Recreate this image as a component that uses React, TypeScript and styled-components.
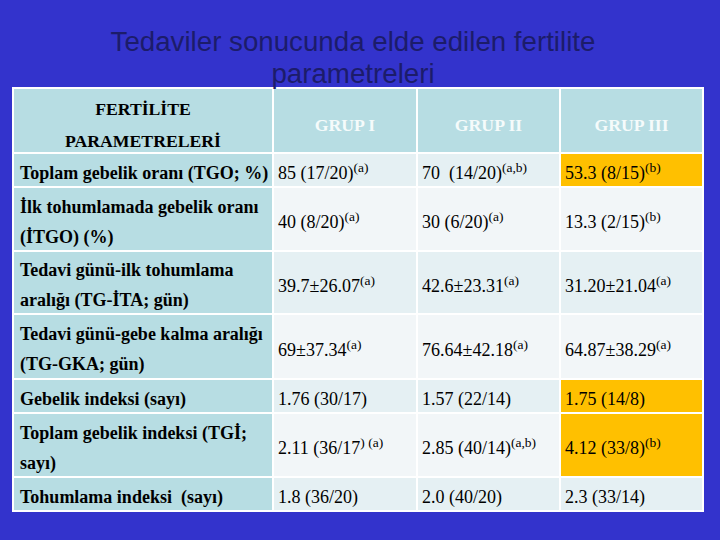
import React from "react";
import styled, { createGlobalStyle } from "styled-components";

const GlobalStyle = createGlobalStyle`
  html, body { margin: 0; padding: 0; background: #3333cc; }
  * { box-sizing: border-box; }
`;

const Page = styled.div`
  width: 720px;
  height: 540px;
  background: #3333cc;
  display: flex;
  flex-direction: column;
  padding: 26px 0 0 12px;
  overflow: hidden;
`;

const Title = styled.h1`
  position: relative;
  z-index: 1;
  margin: 0;
  padding-right: 26px;
  font-family: "Liberation Sans", Arial, sans-serif;
  font-weight: normal;
  font-size: 27.7px;
  line-height: 32px;
  color: #1c1c6a;
  text-align: center;
  height: 61px;
`;

const Table = styled.div`
  width: 692px;
  display: grid;
  grid-template-columns: 258px 142px 141px 141px;
  grid-template-rows: 63px 32px 62px 61px 63px 32px 62px 32px;
  gap: 2px;
  padding: 2px;
  background: #ffffff;
  font-family: "Liberation Serif", "Times New Roman", serif;
  font-size: 18px;
  color: #000;
`;

const HeadCell = styled.div<{ $light?: boolean }>`
  background: #b7dde3;
  display: flex;
  flex-direction: column;
  align-items: center;
  justify-content: center;
  padding-top: 8px;
  font-weight: bold;
  font-size: 17.7px;
  line-height: 32px;
  color: ${(p) => (p.$light ? "#f5fbfb" : "#000")};
  white-space: nowrap;
`;

const LabelCell = styled.div`
  background: #b7dde3;
  display: flex;
  flex-direction: column;
  justify-content: center;
  padding: 5px 0 0 6px;
  font-weight: bold;
  line-height: 30px;
  white-space: pre;
`;

const ValueCell = styled.div<{ $alt: boolean; $hl?: boolean }>`
  background: ${(p) => (p.$hl ? "#ffc000" : p.$alt ? "#f2f6f8" : "#e5f0f3")};
  display: flex;
  align-items: center;
  padding: 6px 0 0 4px;
  line-height: 22px;
  white-space: pre;
`;

const Sup = styled.span`
  font-size: 13.5px;
  vertical-align: 7px;
  line-height: 0;
`;

type Cell = { text: string; sup?: string; hl?: boolean };
type Row = { label: string[]; cells: Cell[] };

const rows: Row[] = [
  {
    label: ["Toplam gebelik oranı (TGO; %)"],
    cells: [
      { text: "85 (17/20)", sup: "(a)" },
      { text: "70  (14/20)", sup: "(a,b)" },
      { text: "53.3 (8/15)", sup: "(b)", hl: true },
    ],
  },
  {
    label: ["İlk tohumlamada gebelik oranı", "(İTGO) (%)"],
    cells: [
      { text: "40 (8/20)", sup: "(a)" },
      { text: "30 (6/20)", sup: "(a)" },
      { text: "13.3 (2/15)", sup: "(b)" },
    ],
  },
  {
    label: ["Tedavi günü-ilk tohumlama", "aralığı (TG-İTA; gün)"],
    cells: [
      { text: "39.7±26.07", sup: "(a)" },
      { text: "42.6±23.31", sup: "(a)" },
      { text: "31.20±21.04", sup: "(a)" },
    ],
  },
  {
    label: ["Tedavi günü-gebe kalma aralığı", "(TG-GKA; gün)"],
    cells: [
      { text: "69±37.34", sup: "(a)" },
      { text: "76.64±42.18", sup: "(a)" },
      { text: "64.87±38.29", sup: "(a)" },
    ],
  },
  {
    label: ["Gebelik indeksi (sayı)"],
    cells: [
      { text: "1.76 (30/17)" },
      { text: "1.57 (22/14)" },
      { text: "1.75 (14/8)", hl: true },
    ],
  },
  {
    label: ["Toplam gebelik indeksi (TGİ;", "sayı)"],
    cells: [
      { text: "2.11 (36/17", sup: ") (a)" },
      { text: "2.85 (40/14)", sup: "(a,b)" },
      { text: "4.12 (33/8)", sup: "(b)", hl: true },
    ],
  },
  {
    label: ["Tohumlama indeksi  (sayı)"],
    cells: [
      { text: "1.8 (36/20)" },
      { text: "2.0 (40/20)" },
      { text: "2.3 (33/14)" },
    ],
  },
];

export default function App() {
  return (
    <>
      <GlobalStyle />
      <Page>
        <Title>
          Tedaviler sonucunda elde edilen fertilite
          <br />
          parametreleri
        </Title>
        <Table>
          <HeadCell>
            <span>FERTİLİTE</span>
            <span>PARAMETRELERİ</span>
          </HeadCell>
          <HeadCell $light>GRUP I</HeadCell>
          <HeadCell $light>GRUP II</HeadCell>
          <HeadCell $light>GRUP III</HeadCell>
          {rows.map((r, i) => (
            <React.Fragment key={i}>
              <LabelCell>
                {r.label.map((l, j) => (
                  <span key={j}>{l}</span>
                ))}
              </LabelCell>
              {r.cells.map((c, j) => (
                <ValueCell key={j} $alt={i % 2 === 1} $hl={c.hl}>
                  <span>
                    {c.text}
                    {c.sup && <Sup>{c.sup}</Sup>}
                  </span>
                </ValueCell>
              ))}
            </React.Fragment>
          ))}
        </Table>
      </Page>
    </>
  );
}
